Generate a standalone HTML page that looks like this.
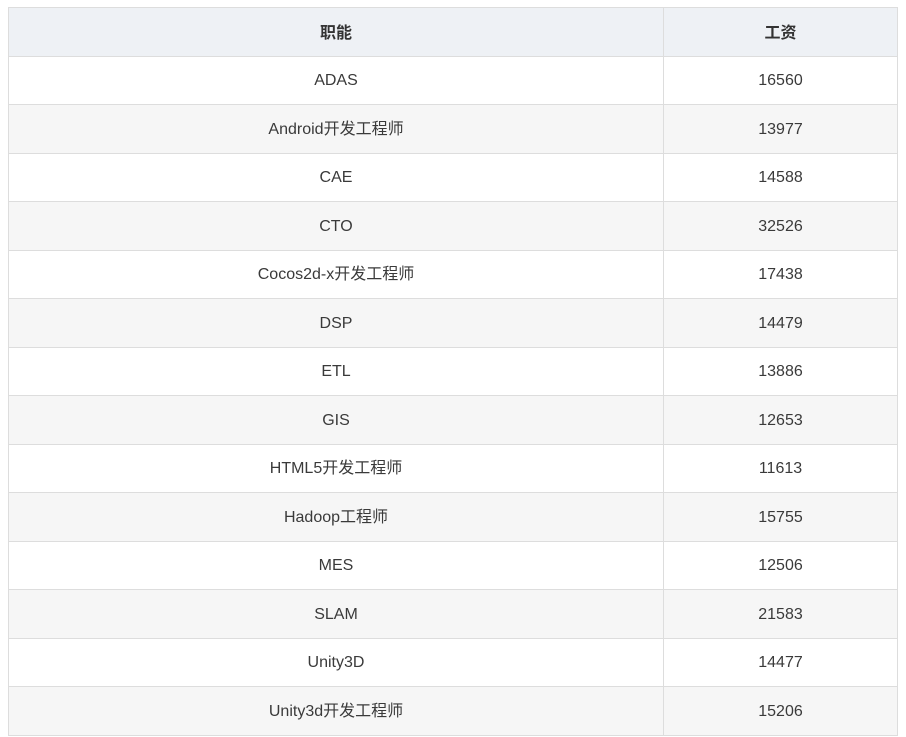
<!DOCTYPE html>
<html><head><meta charset="utf-8"><style>
html,body{margin:0;padding:0;background:#fff;width:906px;height:737px;overflow:hidden}
table{position:absolute;left:8px;top:7px;width:890px;border-collapse:collapse;table-layout:fixed;font-family:"Liberation Sans","Noto Sans CJK SC",sans-serif;font-size:16px;color:#3a3a3a}
td,th{border:1px solid #ddd;text-align:center;height:47.5px;padding:0;vertical-align:middle;line-height:20px}
td span,th span{display:inline-block;height:20px;line-height:20px;overflow:visible;vertical-align:middle}
td{padding-top:2px;height:45.5px}
th{background:#eef1f5;font-weight:bold;color:#333;padding-top:4px;height:43.5px}
tr:nth-child(odd) td{background:#f6f6f6}
</style></head><body>
<table>
<colgroup><col style="width:655px"><col></colgroup>
<tr><th><span>职能</span></th><th><span>工资</span></th></tr>
<tr><td><span>ADAS</span></td><td><span>16560</span></td></tr>
<tr><td><span>Android开发工程师</span></td><td><span>13977</span></td></tr>
<tr><td><span>CAE</span></td><td><span>14588</span></td></tr>
<tr><td><span>CTO</span></td><td><span>32526</span></td></tr>
<tr><td><span>Cocos2d-x开发工程师</span></td><td><span>17438</span></td></tr>
<tr><td><span>DSP</span></td><td><span>14479</span></td></tr>
<tr><td><span>ETL</span></td><td><span>13886</span></td></tr>
<tr><td><span>GIS</span></td><td><span>12653</span></td></tr>
<tr><td><span>HTML5开发工程师</span></td><td><span>11613</span></td></tr>
<tr><td><span>Hadoop工程师</span></td><td><span>15755</span></td></tr>
<tr><td><span>MES</span></td><td><span>12506</span></td></tr>
<tr><td><span>SLAM</span></td><td><span>21583</span></td></tr>
<tr><td><span>Unity3D</span></td><td><span>14477</span></td></tr>
<tr><td><span>Unity3d开发工程师</span></td><td><span>15206</span></td></tr>
</table>
</body></html>
